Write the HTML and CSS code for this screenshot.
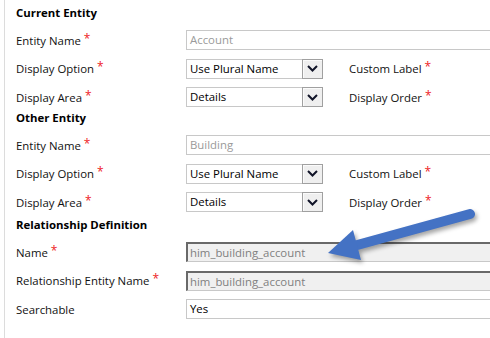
FILE: index.html
```html
<!DOCTYPE html>
<html lang="en">
<head>
    <meta charset="UTF-8">
    <meta name="viewport" content="width=device-width, initial-scale=1.0">
    <title>Relationship - N:1</title>
    <link rel="stylesheet" href="styles.css">
</head>
<body>
    <div class="form">
        <section class="group">
            <h2 class="group-title">Current Entity</h2>
            <div class="row">
                <span class="label">Entity Name<span class="req">*</span></span>
                <div class="input input-muted">Account</div>
            </div>
            <div class="row">
                <span class="label">Display Option<span class="req">*</span></span>
                <div class="select">
                    <span class="select-text">Use Plural Name</span>
                    <span class="select-btn"><svg width="11" height="7" viewBox="0 0 11 7"><polyline points="1,1 5.5,5.5 10,1" fill="none" stroke="#111428" stroke-width="2"/></svg></span>
                </div>
                <span class="label label-side">Custom Label<span class="req">*</span></span>
            </div>
            <div class="row">
                <span class="label">Display Area<span class="req">*</span></span>
                <div class="select">
                    <span class="select-text">Details</span>
                    <span class="select-btn"><svg width="11" height="7" viewBox="0 0 11 7"><polyline points="1,1 5.5,5.5 10,1" fill="none" stroke="#111428" stroke-width="2"/></svg></span>
                </div>
                <span class="label label-side">Display Order<span class="req">*</span></span>
            </div>
        </section>

        <section class="group">
            <h2 class="group-title">Other Entity</h2>
            <div class="row">
                <span class="label">Entity Name<span class="req">*</span></span>
                <div class="input input-muted">Building</div>
            </div>
            <div class="row">
                <span class="label">Display Option<span class="req">*</span></span>
                <div class="select">
                    <span class="select-text">Use Plural Name</span>
                    <span class="select-btn"><svg width="11" height="7" viewBox="0 0 11 7"><polyline points="1,1 5.5,5.5 10,1" fill="none" stroke="#111428" stroke-width="2"/></svg></span>
                </div>
                <span class="label label-side">Custom Label<span class="req">*</span></span>
            </div>
            <div class="row">
                <span class="label">Display Area<span class="req">*</span></span>
                <div class="select">
                    <span class="select-text">Details</span>
                    <span class="select-btn"><svg width="11" height="7" viewBox="0 0 11 7"><polyline points="1,1 5.5,5.5 10,1" fill="none" stroke="#111428" stroke-width="2"/></svg></span>
                </div>
                <span class="label label-side">Display Order<span class="req">*</span></span>
            </div>
        </section>

        <section class="group group-rel">
            <h2 class="group-title">Relationship Definition</h2>
            <div class="row">
                <span class="label">Name<span class="req">*</span></span>
                <div class="input input-locked">him_building_account</div>
            </div>
            <div class="row">
                <span class="label">Relationship Entity Name<span class="req">*</span></span>
                <div class="input input-locked">him_building_account</div>
            </div>
            <div class="row">
                <span class="label">Searchable</span>
                <div class="input">Yes</div>
            </div>
        </section>
    </div>

    <!-- callout arrow drawn over the form -->
    <svg class="callout" width="490" height="338" viewBox="0 0 490 338">
        <g class="callout-arrow">
            <line x1="470" y1="214" x2="350" y2="247" stroke="#4472c4" stroke-width="10" stroke-linecap="round"/>
            <polygon points="328,253 353,230 361,260" fill="#4472c4"/>
        </g>
    </svg>
</body>
</html>
```

FILE: styles.css
```css
* {
    margin: 0;
    padding: 0;
    box-sizing: border-box;
}

body {
    font-family: "Open Sans", "Noto Sans", sans-serif;
    font-size: 11.4px;
    color: #111;
    background: #ffffff;
    width: 490px;
    height: 338px;
    overflow: hidden;
    position: relative;
}

.form {
    margin-left: 4px;
    border-left: 1px solid #dcdcdc;
    padding: 2px 0 0 11px;
    height: 338px;
}

.group-rel {
    margin-top: 6px;
}

.group-title {
    font-size: 11.4px;
    font-weight: 700;
    line-height: 14px;
    color: #000;
    margin: 4px 0 10px;
}

.row {
    display: flex;
    align-items: center;
    height: 20px;
    margin-bottom: 8.5px;
    white-space: nowrap;
}

.row:last-child {
    margin-bottom: 0;
}

.label {
    width: 170px;
    flex-shrink: 0;
}

.label-side {
    width: auto;
    margin-left: 26px;
}

.req {
    color: #ee1c25;
    font-size: 12px;
    margin-left: 3px;
    position: relative;
    top: -2px;
}

.input {
    width: 340px;
    height: 20px;
    flex-shrink: 0;
    border: 1px solid #c8c8c8;
    padding: 0 3px;
    line-height: 18px;
    color: #000;
    background: #fff;
}

.input-muted {
    color: #9a9a9a;
}

.input-locked {
    color: #808080;
    background: #f0f0f0;
    border-top: 2px solid #696969;
    border-left: 2px solid #696969;
    padding-left: 2px;
    line-height: 17px;
}

.select {
    width: 137px;
    height: 20px;
    flex-shrink: 0;
    display: flex;
    border: 1px solid #c8c8c8;
    color: #000;
}

.select-text {
    flex: 1;
    padding-left: 3px;
    line-height: 18px;
}

.select-btn {
    width: 21px;
    height: 20px;
    margin: -1px -1px -1px 0;
    border: 1px solid #a0a0a0;
    background: #efefef;
    box-shadow: inset 1px 1px 0 #fbfbfb;
    display: flex;
    align-items: center;
    justify-content: center;
}

.callout {
    position: absolute;
    left: 0;
    top: 0;
    pointer-events: none;
}

.callout-arrow {
    filter: drop-shadow(2px 3px 2px rgba(0, 0, 0, 0.35));
}
```
